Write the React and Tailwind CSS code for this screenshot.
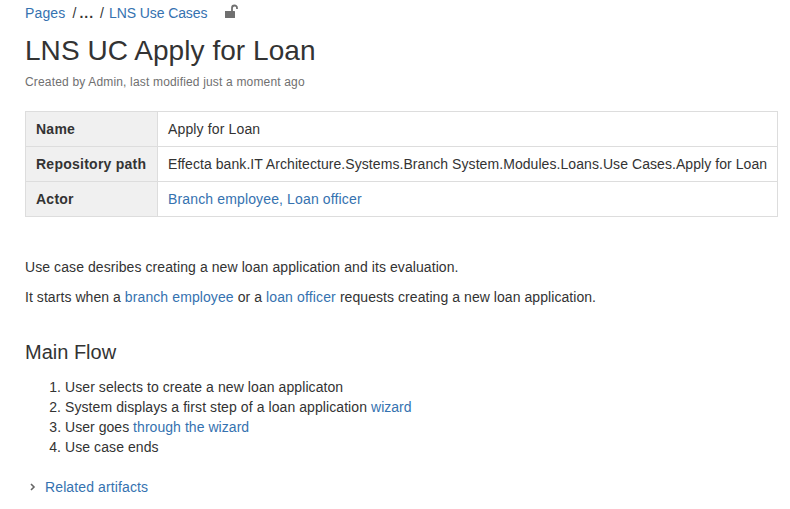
import React from 'react';

const Link = ({ children, className = 'tracking-[0.09px]' }) => <a className={`text-[#3572b0] ${className}`}>{children}</a>;

export default function App() {
    return (
        <div className="w-[790px] h-[509px] overflow-hidden bg-white px-[25px] pt-[5px] text-[14px] leading-[20px] text-[#333333] tracking-[0.08px] font-['Liberation_Sans',Arial,sans-serif]">
            <div className="flex items-center h-[16px]">
                <Link className="tracking-[0.14px]">Pages</Link>
                <span className="ml-[7px]">/</span>
                <span className="ml-[3px] font-bold tracking-[1px]">...</span>
                <span className="ml-[6px]">/</span>
                <span className="ml-[5px]"><Link className="tracking-[-0.1px]">LNS Use Cases</Link></span>
                <svg className="ml-[17px] -mt-[3px]" width="16" height="16" viewBox="0 0 16 16" fill="#707070">
                    <path d="M1 7h9.5a.5.5 0 0 1 .5.5v6a.5.5 0 0 1-.5.5H1.500a.5.5 0 0 1-.5-.5z" />
                    <path d="M8 7V4a2.500 2.500 0 0 1 5 0v1" fill="none" stroke="#707070" strokeWidth="1.800" />
                </svg>
            </div>
            <h1 className="mt-[10px] text-[28px] leading-[40px] tracking-[0.05px] text-[#333333]">LNS UC Apply for Loan</h1>
            <p className="mt-[3px] text-[12px] leading-[16px] tracking-[0.17px] text-[#707070]">Created by Admin, last modified just a moment ago</p>

            <table className="mt-[21px] w-[753px] table-fixed border-collapse">
                <tbody>
                    <tr className="h-[35px]">
                        <th className="w-[132px] border border-[#dddddd] bg-[#f0f0f0] px-[10px] text-left font-bold tracking-[0.25px]">Name</th>
                        <td className="border border-[#dddddd] px-[10px] tracking-[0.14px]">Apply for Loan</td>
                    </tr>
                    <tr className="h-[35px]">
                        <th className="border border-[#dddddd] bg-[#f0f0f0] px-[10px] text-left font-bold tracking-[0.25px]">Repository path</th>
                        <td className="whitespace-nowrap border border-[#dddddd] px-[10px] tracking-[0.067px]">Effecta bank.IT Architecture.Systems.Branch System.Modules.Loans.Use Cases.Apply for Loan</td>
                    </tr>
                    <tr className="h-[35px]">
                        <th className="border border-[#dddddd] bg-[#f0f0f0] px-[10px] text-left font-bold tracking-[0.25px]">Actor</th>
                        <td className="border border-[#dddddd] px-[10px]"><Link className="tracking-[0.14px]">Branch employee, Loan officer</Link></td>
                    </tr>
                </tbody>
            </table>

            <p className="mt-[40px]">Use case desribes creating a new loan application and its evaluation.</p>
            <p className="mt-[10px] tracking-[0.06px]">It starts when a <Link className="tracking-[0.1px]">branch employee</Link> or a <Link className="tracking-[0.14px]">loan officer</Link> requests creating a new loan application.</p>

            <h2 className="mt-[30px] text-[20px] leading-[30px] tracking-normal">Main Flow</h2>
            <ol className="mt-[10px] list-decimal pl-[40px]">
                <li>User selects to create a new loan applicaton</li>
                <li>System displays a first step of a loan application <Link className="tracking-normal">wizard</Link></li>
                <li className="tracking-[0.04px]">User goes <Link className="tracking-[0.05px]">through the wizard</Link></li>
                <li>Use case ends</li>
            </ol>

            <div className="mt-[20px] flex items-center">
                <svg className="ml-[3px]" width="10" height="10" viewBox="0 0 10 10" fill="none" stroke="#666666" strokeWidth="1.600">
                    <path d="M3 2 6 5 3 8" />
                </svg>
                <span className="ml-[7px]"><Link className="tracking-[0.12px]">Related artifacts</Link></span>
            </div>
        </div>
    );
}
